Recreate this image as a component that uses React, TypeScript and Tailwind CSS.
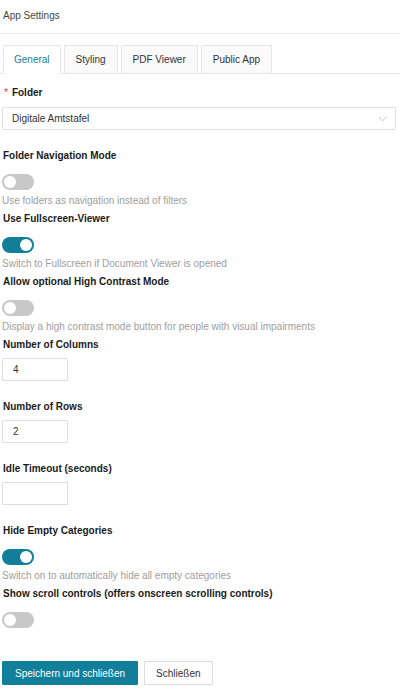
import React from "react";

const Toggle = ({ on }: { on: boolean }) => (
  <div
    className={`relative w-[32px] h-[16px] rounded-full ${on ? "bg-[#117e9a]" : "bg-[#c8c8c8]"}`}
  >
    <div
      className={`absolute top-[2px] w-[12px] h-[12px] rounded-full bg-white ${on ? "left-[18px]" : "left-[2px]"}`}
    />
  </div>
);

const Label = ({ children, className = "" }: { children: React.ReactNode; className?: string }) => (
  <div className={`pl-px text-[10px] leading-[14px] font-bold text-[#1a1a1a] ${className}`}>{children}</div>
);

const Desc = ({ children }: { children: React.ReactNode }) => (
  <div className="mt-[4px] text-[10px] leading-[14px] text-[#9e9e9e]">{children}</div>
);

const ToggleGroup = ({ label, on, desc, first }: { label: string; on: boolean; desc?: string; first?: boolean }) => (
  <div className={first ? "" : "mt-[4px]"}>
    <Label>{label}</Label>
    <div className="mt-[11px]">
      <Toggle on={on} />
    </div>
    {desc && <Desc>{desc}</Desc>}
  </div>
);

const NumInput = ({ label, value, className = "" }: { label: string; value: string; className?: string }) => (
  <div className={className}>
    <Label>{label}</Label>
    <div className="mt-[6px] w-[66px] h-[23px] border border-[#dedede] rounded-[1px] bg-white flex items-center pl-[10px] text-[10px] text-[#333]">
      {value}
    </div>
  </div>
);

export default function App() {
  return (
    <div className="w-[400px] h-[690px] bg-white overflow-hidden" style={{ fontFamily: '"Liberation Sans", Arial, sans-serif' }}>
      <div className="h-[34px] border-b border-[#ebebeb] pt-[9px] pl-[3px] text-[10px] leading-[14px] text-[#444]">
        App Settings
      </div>
      <div className="mt-[11px] h-[29px] border-b border-[#e6e6e6] flex items-end gap-[3px] pl-[3px]">
        <div className="-mb-px h-[29px] px-[10px] border border-[#e6e6e6] border-b-white bg-white flex items-center text-[10px] text-[#1b8199]">
          General
        </div>
        <div className="-mb-px h-[29px] px-[11px] border border-[#e6e6e6] bg-[#fafafa] flex items-center text-[10px] text-[#333]">
          Styling
        </div>
        <div className="-mb-px h-[29px] px-[11px] border border-[#e6e6e6] bg-[#fafafa] flex items-center text-[10px] text-[#333]">
          PDF Viewer
        </div>
        <div className="-mb-px h-[29px] px-[11px] border border-[#e6e6e6] bg-[#fafafa] flex items-center text-[10px] text-[#333]">
          Public App
        </div>
      </div>

      <div className="pl-[2px] pr-[4px]">
        <div className="mt-[12px] flex items-center pl-[2px] text-[10px] leading-[14px] font-bold text-[#1a1a1a]">
          <span className="text-[#e53935] mr-[4px] font-normal">*</span>
          Folder
        </div>
        <div className="mt-[7px] h-[23px] border border-[#e0e0e0] rounded-[1px] flex items-center justify-between pl-[9px] pr-[8px] text-[10px] text-[#333]">
          <span>Digitale Amtstafel</span>
          <svg width="9" height="6" viewBox="0 0 9 6" fill="none">
            <path d="M0.5 0.8 L4.5 4.8 L8.5 0.8" stroke="#c4c4c4" strokeWidth="1" />
          </svg>
        </div>

        <div className="mt-[19px]">
          <ToggleGroup first label="Folder Navigation Mode" on={false} desc="Use folders as navigation instead of filters" />
          <ToggleGroup label="Use Fullscreen-Viewer" on={true} desc="Switch to Fullscreen if Document Viewer is opened" />
          <ToggleGroup
            label="Allow optional High Contrast Mode"
            on={false}
            desc="Display a high contrast mode button for people with visual impairments"
          />
        </div>

        <NumInput className="mt-[4px]" label="Number of Columns" value="4" />
        <NumInput className="mt-[19px]" label="Number of Rows" value="2" />
        <NumInput className="mt-[19px]" label="Idle Timeout (seconds)" value="" />

        <div className="mt-[19px]">
          <ToggleGroup first label="Hide Empty Categories" on={true} desc="Switch on to automatically hide all empty categories" />
          <ToggleGroup label="Show scroll controls (offers onscreen scrolling controls)" on={false} />
        </div>

        <div className="mt-[33px] flex gap-[6px]">
          <button className="h-[24px] px-[12px] bg-[#117e9a] border border-[#117e9a] text-white text-[10px] rounded-[1px]">
            Speichern und schließen
          </button>
          <button className="h-[24px] px-[11px] bg-white border border-[#dcdcdc] text-[#333] text-[10px] rounded-[1px]">
            Schließen
          </button>
        </div>
      </div>
    </div>
  );
}
